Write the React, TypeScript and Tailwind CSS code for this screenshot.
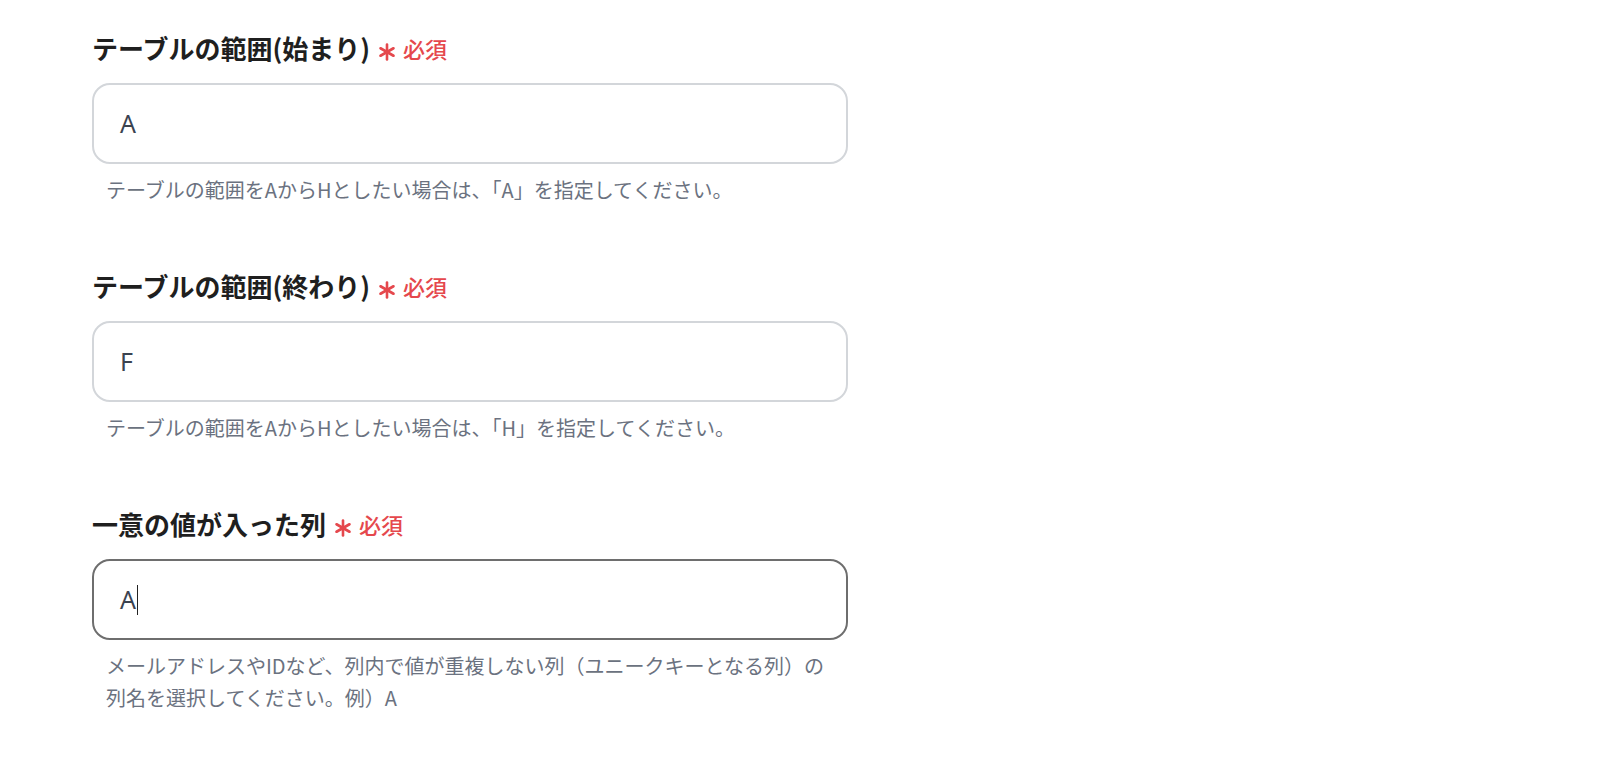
import React from 'react'

const font = { fontFamily: '"Noto Sans CJK JP", "Noto Sans", sans-serif' }

function Asterisk() {
  return (
    <svg width="18" height="18" viewBox="0 0 18 18" className="mt-[7px] shrink-0">
      <g stroke="#e5484d" strokeWidth="2.6" strokeLinecap="round">
        <line x1="9" y1="1.5" x2="9" y2="16.5" />
        <line x1="2.5" y1="5.25" x2="15.5" y2="12.75" />
        <line x1="2.5" y1="12.75" x2="15.5" y2="5.25" />
      </g>
    </svg>
  )
}

function Field({ label, value, help, focused }: { label: string; value: string; help: React.ReactNode; focused?: boolean }) {
  return (
    <div className="flex flex-col">
      <div className="flex items-center h-[36px]">
        <span className="text-[26px] font-bold text-[#1f1f1f] leading-[36px]">{label}</span>
        <span className="ml-[8px] flex items-center gap-[7px]">
          <Asterisk />
          <span className="text-[22px] font-medium text-[#e5484d] leading-[36px]">必須</span>
        </span>
      </div>
      <div
        className={
          focused
            ? 'mt-[17px] w-[756px] h-[81px] rounded-[18px] border-2 border-[#6e6e6e] bg-white flex items-center pl-[26px]'
            : 'mt-[17px] w-[756px] h-[81px] rounded-[18px] border-2 border-[#d3d6da] bg-white flex items-center pl-[26px]'
        }
      >
        <span className="text-[25px] text-[#3b4350]" style={{ fontFamily: '"Noto Sans", sans-serif' }}>{value}</span>
        {focused && <span className="w-[1.5px] h-[30px] bg-[#222] ml-[1px]" />}
      </div>
      <p className="mt-[10px] pl-[14px] text-[20px] leading-[32px] text-[#6b7280]">{help}</p>
    </div>
  )
}

export default function App() {
  return (
    <div className="min-h-[778px] w-full bg-white pl-[92px] pt-[30px]" style={font}>
      <div className="flex flex-col gap-[62px]">
        <Field
          label="テーブルの範囲(始まり)"
          value="A"
          help="テーブルの範囲をAからHとしたい場合は、「A」を指定してください。"
        />
        <Field
          label="テーブルの範囲(終わり)"
          value="F"
          help="テーブルの範囲をAからHとしたい場合は、「H」を指定してください。"
        />
        <Field
          label="一意の値が入った列"
          value="A"
          focused
          help={<>メールアドレスやIDなど、列内で値が重複しない列（ユニークキーとなる列）の<br />列名を選択してください。例）A</>}
        />
      </div>
    </div>
  )
}
